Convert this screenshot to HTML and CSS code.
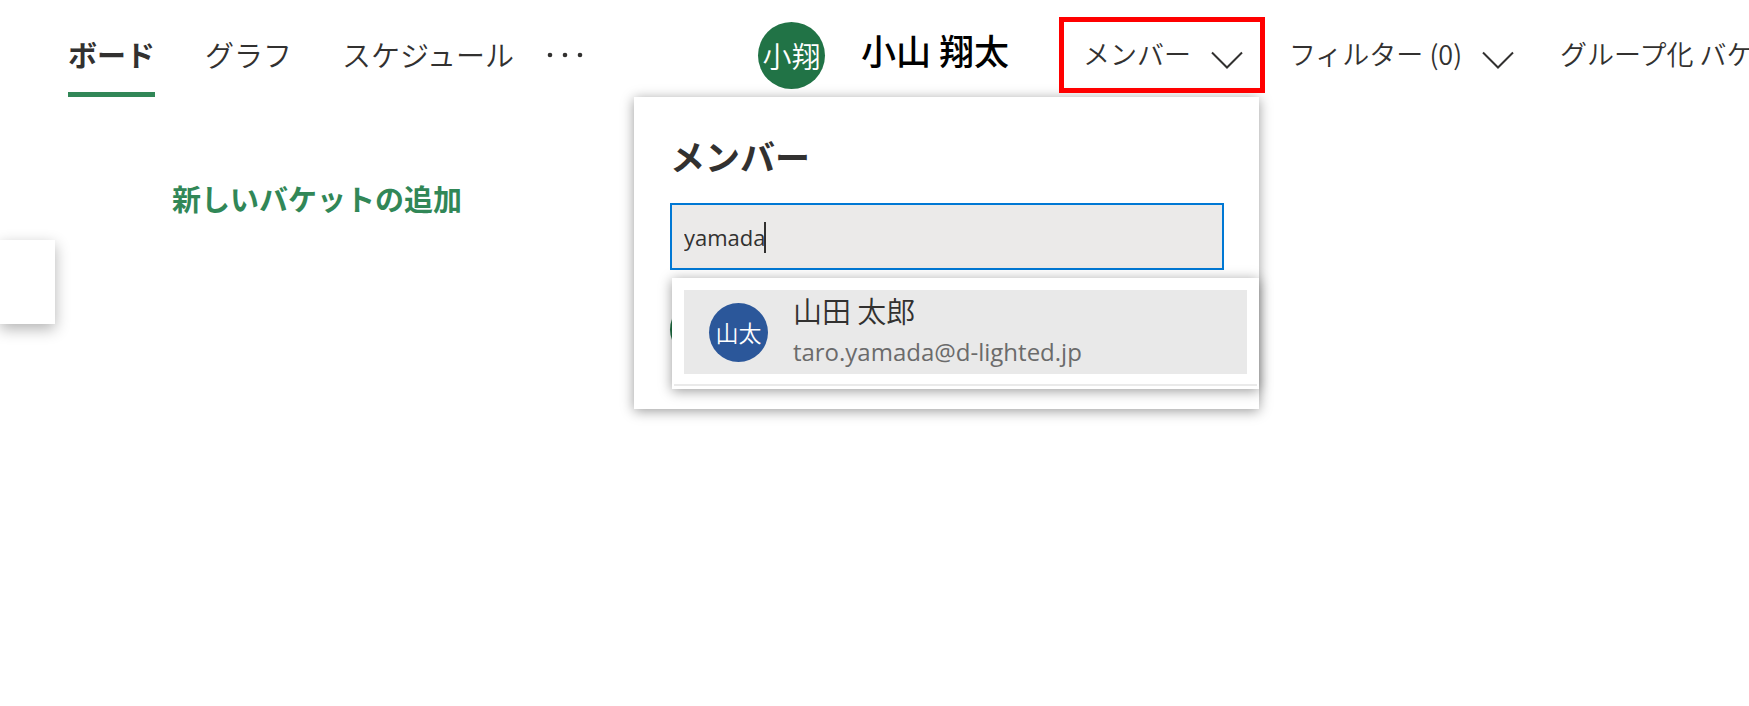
FILE: index.html
```
<!DOCTYPE html>
<html lang="ja">
<head>
    <meta charset="UTF-8">
    <meta name="viewport" content="width=device-width, initial-scale=1.0">
    <title>ボード</title>
    <link rel="stylesheet" href="styles.css">
</head>
<body>
    <header class="topbar">
        <nav class="tabs">
            <a class="tab active" href="#board">ボード</a>
            <a class="tab" href="#chart">グラフ</a>
            <a class="tab" href="#schedule">スケジュール</a>
            <button class="more" type="button" aria-label="その他">
                <svg width="36" height="6" viewBox="0 0 36 6" fill="currentColor">
                    <circle cx="3" cy="3" r="2.3"/>
                    <circle cx="18" cy="3" r="2.3"/>
                    <circle cx="33" cy="3" r="2.3"/>
                </svg>
            </button>
        </nav>

        <div class="user">
            <span class="avatar avatar-user">小翔</span>
            <span class="user-name">小山 翔太</span>
        </div>

        <div class="toolbar">
            <div class="members">
                <button class="tool tool-members" type="button">
                    メンバー
                    <svg class="chevron" width="32" height="18" viewBox="0 0 32 18"><path d="M1 1.5L16 16.5L31 1.5"/></svg>
                </button>

                <section class="panel">
                    <h2 class="panel-title"><label for="memberSearch">メンバー</label></h2>
                    <div class="search">
                        <input class="search-input" id="memberSearch" type="text" value="yamada" autocomplete="off">
                        <span class="caret"></span>
                    </div>
                    <div class="member-list">
                        <span class="avatar avatar-member"></span>
                        <div class="suggestions">
                            <button class="suggestion" type="button">
                                <span class="avatar avatar-person">山太</span>
                                <span class="person">
                                    <span class="person-name">山田 太郎</span>
                                    <span class="person-mail">taro.yamada@d-lighted.jp</span>
                                </span>
                            </button>
                        </div>
                    </div>
                </section>
            </div>
            <button class="tool" type="button">
                フィルター (0)
                <svg class="chevron" width="32" height="18" viewBox="0 0 32 18"><path d="M1 1.5L16 16.5L31 1.5"/></svg>
            </button>
            <button class="tool tool-group" type="button">グループ化 バケット</button>
        </div>
    </header>

    <main class="board">
        <div class="card"></div>
        <button class="add-bucket" type="button">新しいバケットの追加</button>
    </main>
</body>
</html>
```
FILE: styles.css
```
* {
    box-sizing: border-box;
}

body {
    margin: 0;
    min-height: 100vh;
    font-family: "Noto Sans CJK JP", "Noto Sans", sans-serif;
    font-size: 29px;
    font-weight: 350;
    color: #323130;
    background-color: #fff;
    overflow-x: hidden;
}

button {
    padding: 0;
    border: none;
    background: none;
    font: inherit;
    color: inherit;
    white-space: nowrap;
    cursor: pointer;
}

/* Top bar */
.topbar {
    display: flex;
    align-items: center;
    height: 110px;
    padding-left: 68px;
    white-space: nowrap;
}

.tabs {
    display: flex;
    align-items: center;
    gap: 50px;
}

.tab {
    padding: 14px 0 16px;
    line-height: 44px;
    border-top: 5px solid transparent;
    border-bottom: 5px solid transparent;
    color: inherit;
    text-decoration: none;
}

.tab.active {
    font-weight: bold;
    border-bottom-color: #318757;
}

.more {
    display: flex;
    margin-left: -17px;
}

.user {
    display: flex;
    align-items: center;
    gap: 36px;
    margin-left: 175px;
}

.avatar {
    display: flex;
    flex: none;
    align-items: center;
    justify-content: center;
    border-radius: 50%;
    color: #fff;
}

.avatar-user {
    width: 67px;
    height: 67px;
    background-color: #217346;
}

.user-name {
    padding-bottom: 12px;
    font-size: 35px;
    font-weight: 500;
    color: #000;
}

.toolbar {
    display: flex;
    align-items: center;
    gap: 24px;
    margin-left: 50px;
    font-size: 27px;
}

.tool {
    display: flex;
    align-items: center;
    gap: 20px;
    padding-bottom: 3px;
}

.tool-members {
    position: relative;
    z-index: 2;
    height: 76px;
    padding: 0 17px 3px 19px;
    border: 5px solid #f00;
}

.tool-group {
    margin-left: 22px;
}

.chevron {
    margin-top: 12px;
    fill: none;
    stroke: #323130;
    stroke-width: 2;
}

/* Member panel */
.members {
    position: relative;
}

.panel {
    position: absolute;
    top: 80px;
    right: 6px;
    z-index: 1;
    width: 625px;
    padding: 34px 0 20px;
    background-color: #fff;
    box-shadow: 0 2px 12px rgba(0, 0, 0, 0.4);
}

.panel-title {
    margin: 0 0 22px 36px;
    font-size: 35px;
    line-height: 50px;
    font-weight: bold;
}

.search {
    position: relative;
    margin: 0 35px 0 36px;
}

.search-input {
    display: block;
    width: 100%;
    height: 67px;
    padding: 0 12px;
    border: 2px solid #0078d4;
    border-radius: 0;
    outline: none;
    background-color: #ebeae9;
    color: #323130;
    font-family: "Open Sans", "Noto Sans", sans-serif;
    font-size: 22px;
}

.caret {
    position: absolute;
    top: 19px;
    left: 94px;
    width: 2px;
    height: 31px;
    background-color: #323130;
}

.member-list {
    position: relative;
    margin: 8px 0 0 36px;
    padding-left: 2px;
}

.avatar-member {
    position: absolute;
    top: 22px;
    left: 0;
    width: 59px;
    height: 59px;
    background-color: #217346;
}

.suggestions {
    position: relative;
    padding: 12px 12px 15px;
    background-color: #fff;
    box-shadow: 0 2px 12px rgba(0, 0, 0, 0.4);
}

.suggestions::after {
    content: "";
    position: absolute;
    right: 2px;
    bottom: 3px;
    left: 2px;
    height: 2px;
    background-color: #eaeaea;
}

.suggestion {
    display: flex;
    align-items: center;
    gap: 25px;
    width: 100%;
    height: 84px;
    padding-left: 25px;
    background-color: #e9e9e9;
    text-align: left;
}

.avatar-person {
    width: 59px;
    height: 59px;
    background-color: #2b579a;
    font-size: 23px;
}

.person {
    display: flex;
    flex-direction: column;
    gap: 2px;
}

.person-name {
    font-size: 29px;
    line-height: 38px;
}

.person-mail {
    font-family: "Open Sans", "Noto Sans", sans-serif;
    font-size: 24px;
    font-weight: 400;
    line-height: 42px;
    color: #6b6b6b;
}

/* Board */
.board {
    display: flex;
    align-items: flex-start;
    padding-top: 66px;
}

.card {
    width: 55px;
    height: 84px;
    margin-top: 64px;
    background-color: #fff;
    box-shadow: 0 5px 14px rgba(0, 0, 0, 0.3);
}

.add-bucket {
    margin-left: 117px;
    font-size: 29px;
    font-weight: bold;
    line-height: 44px;
    color: #318757;
}
```
